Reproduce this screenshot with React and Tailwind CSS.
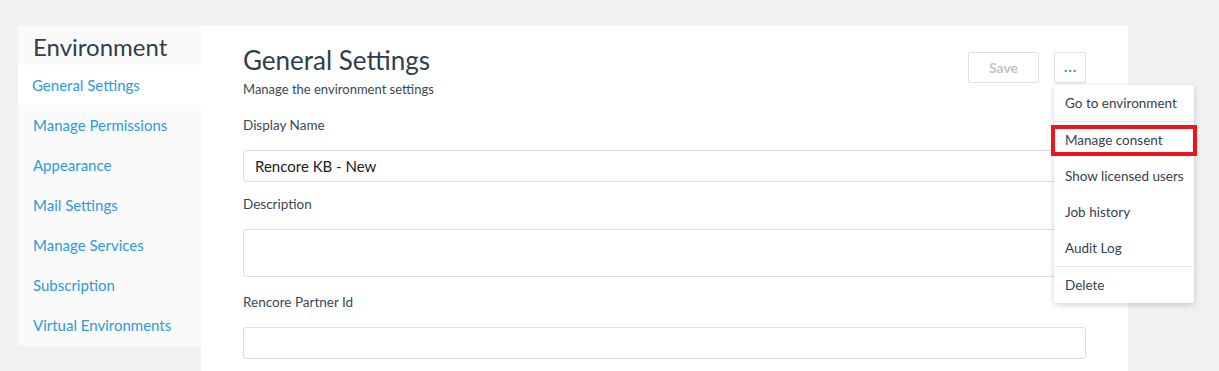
const sideItems = [
  'General Settings',
  'Manage Permissions',
  'Appearance',
  'Mail Settings',
  'Manage Services',
  'Subscription',
  'Virtual Environments',
]

const menuItems = [
  ['Go to environment'],
  ['Manage consent', 'Show licensed users', 'Job history', 'Audit Log'],
  ['Delete'],
]

function Sidebar() {
  return (
    <aside className="w-[183px] h-[320px] shrink-0 bg-[#fafafa]">
      <div className="h-[39px] pl-[15px] pt-[6px] text-[24px] leading-[30px] text-[#2f3e4e]">Environment</div>
      {sideItems.map((label, i) => (
        <div
          key={label}
          className={
            i === 0
              ? 'h-[40px] flex items-center pl-[14px] bg-white text-[15px] text-[#2b9be0]'
              : 'h-[40px] flex items-center pl-[15px] text-[15px] text-[#2b9be0]'
          }
        >
          {label}
        </div>
      ))}
    </aside>
  )
}

function MoreMenu() {
  return (
    <div className="relative">
      <button className="w-[32px] h-[31px] border border-[#dfe2e6] rounded-[2px] bg-white shadow-[0_1px_2px_rgba(0,0,0,0.08)] flex items-center justify-center text-[#2b9be0] text-[15px] font-bold tracking-[1px] leading-none pb-[3px] pl-[1px]">
        ...
      </button>
      <div className="absolute left-0 top-[33px] w-[140px] bg-white rounded-[2px] shadow-[0_2px_6px_rgba(0,0,0,0.18)] z-10">
        {menuItems.map((group, gi) => (
          <div key={gi} className={gi > 0 ? 'border-t border-[#e6e8eb]' : ''}>
            {group.map((item) => (
              <div key={item} className="relative h-[36px] flex items-center px-[11px] whitespace-nowrap text-[13.5px] text-[#36424f]">
                {item}
                {item === 'Manage consent' && (
                  <div className="absolute left-[-3px] right-[-3px] top-[3px] bottom-[2px] border-[4px] border-[#e8161e]" />
                )}
              </div>
            ))}
          </div>
        ))}
      </div>
    </div>
  )
}

function Field({ label, height, value, mt }) {
  return (
    <div className={mt}>
      <div className="text-[13.5px] leading-[20px] text-[#3c4855]">{label}</div>
      <div
        className={`mt-[15px] w-full ${height} border border-[#dadee3] rounded-[3px] px-[11px] flex items-center text-[15px] text-[#222] bg-white`}
      >
        {value}
      </div>
    </div>
  )
}

export default function App() {
  return (
    <div
      className="w-[1219px] h-[371px] overflow-hidden bg-[#f0f1f3] pt-[26px] pl-[18px]"
      style={{ fontFamily: 'Lato, "Noto Sans", sans-serif' }}
    >
      <div className="flex items-start">
        <Sidebar />
        <main className="w-[927px] h-[345px] bg-white px-[42px] pt-[17px]">
          <div className="flex items-start justify-between">
            <div>
              <h1 className="text-[26px] leading-[34px] text-[#2f3e4e]">General Settings</h1>
              <p className="mt-[3px] text-[13px] leading-[18px] text-[#3c4855]">Manage the environment settings</p>
            </div>
            <div className="flex items-start gap-[15px] pt-[9px]">
              <button className="w-[71px] h-[31px] border border-[#dcdfe3] rounded-[2px] text-[14px] font-bold text-[#c2c4c7]">
                Save
              </button>
              <MoreMenu />
            </div>
          </div>
          <Field label="Display Name" height="h-[32px]" value="Rencore KB - New" mt="mt-[17px]" />
          <Field label="Description" height="h-[48px]" value="" mt="mt-[12px]" />
          <Field label="Rencore Partner Id" height="h-[32px]" value="" mt="mt-[15px]" />
        </main>
      </div>
    </div>
  )
}
